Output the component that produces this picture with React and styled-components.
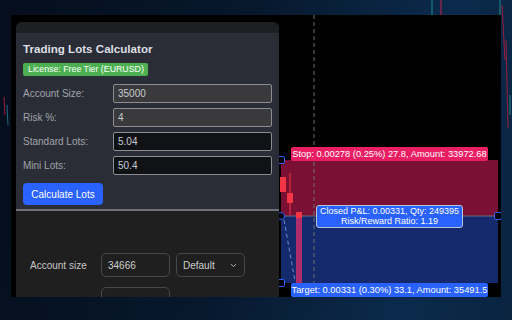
import styled, { createGlobalStyle } from "styled-components"

const Global = createGlobalStyle`
  html, body {
    margin: 0;
    padding: 0;
  }
  body {
    width: 512px;
    height: 320px;
    overflow: hidden;
    font-family: "Liberation Sans", Arial, sans-serif;
  }
`

const Desktop = styled.div`
  position: relative;
  width: 512px;
  height: 320px;
  overflow: hidden;
  background: linear-gradient(100deg, #050e1c 0%, #07182d 45%, #0b2a4c 80%, #0a2440 100%);
`

const Backdrop = styled.svg`
  position: absolute;
  inset: 0;
`

const Screen = styled.div`
  position: relative;
  display: flex;
  margin: 15px 0 0 11px;
  width: 490px;
  height: 282px;
  background: #000;
`

const Panel = styled.section`
  display: flex;
  flex-direction: column;
  margin: 7px 0 0 5px;
  width: 263px;
  border-radius: 6px 6px 0 0;
  overflow: hidden;
  background: #1f1f1f;
`

const PanelTop = styled.div`
  flex-shrink: 0;
  height: 11px;
  background: #1e1f23;
`

const Upper = styled.div`
  flex-shrink: 0;
  display: flex;
  flex-direction: column;
  align-items: flex-start;
  height: 178px;
  padding: 9px 7px 0;
  box-sizing: border-box;
  background: #2a2d35;
  border-bottom: 2px solid #6d7077;
`

const Title = styled.h1`
  margin: 0;
  font-size: 11.6px;
  line-height: 14px;
  font-weight: 700;
  color: #dcdfe4;
`

const Badge = styled.span`
  margin-top: 7px;
  height: 13px;
  padding: 0 4px 0 5px;
  border-radius: 2px;
  background: #4caf50;
  color: #fff;
  font-size: 8.8px;
  line-height: 13px;
`

const Fields = styled.div`
  display: flex;
  flex-direction: column;
  gap: 5px;
  margin-top: 8px;
  width: 100%;
`

const Row = styled.label`
  display: flex;
  align-items: center;
  height: 19px;
`

const Label = styled.span`
  width: 90px;
  font-size: 10px;
  color: #a0a4ac;
`

const Field = styled.div`
  flex: 1;
  height: 19px;
  box-sizing: border-box;
  padding: 0 4px;
  border: 1px solid #8c8e93;
  border-radius: 2px;
  background: ${p => (p.$dark ? "#111216" : "#3a3a3c")};
  color: #c9ccd1;
  font-size: 10px;
  line-height: 17px;
`

const Button = styled.button`
  margin-top: 8px;
  width: 80px;
  height: 22px;
  border: none;
  border-radius: 4px;
  background: #2962ff;
  color: #fff;
  font-family: inherit;
  font-size: 10px;
  padding: 0;
`

const Lower = styled.div`
  flex: 1;
  min-height: 0;
  display: flex;
  flex-direction: column;
  gap: 10px;
  padding: 42px 0 0 14px;
  background: #1f1f1f;
`

const LowerRow = styled.div`
  flex-shrink: 0;
  display: flex;
  align-items: center;
  gap: 6px;
`

const LowerLabel = styled.span`
  width: 65px;
  font-size: 10px;
  color: #c8c8c8;
`

const Box = styled.div`
  display: flex;
  align-items: center;
  justify-content: space-between;
  width: 69px;
  height: 24px;
  box-sizing: border-box;
  padding: 0 6px;
  border: 1px solid #474747;
  border-radius: 5px;
  color: #cfcfcf;
  font-size: 10px;
  margin-left: ${p => (p.$indent ? "71px" : "0")};
`

const Chart = styled.div`
  position: relative;
  flex: 1;
  overflow: hidden;
`

const Zone = styled.div`
  position: absolute;
  left: 2px;
  width: 217px;
  top: ${p => p.$top}px;
  height: ${p => p.$h}px;
  background: ${p => p.$color};
`

const Tag = styled.div`
  position: absolute;
  left: 12px;
  width: 197px;
  top: ${p => p.$top}px;
  height: 14px;
  border-radius: 2px;
  background: ${p => p.$color};
  color: #fff;
  font-size: 9.3px;
  line-height: 14px;
  text-align: center;
  white-space: nowrap;
`

const Result = styled.div`
  position: absolute;
  left: 37px;
  top: 190px;
  width: 147px;
  height: 23px;
  box-sizing: border-box;
  border: 1px solid #b9c3dd;
  border-radius: 3px;
  background: #2962ff;
  color: #fff;
  font-size: 9px;
  line-height: 9.5px;
  text-align: center;
  padding-top: 1px;
  white-space: nowrap;
`

const Handle = styled.div`
  position: absolute;
  left: ${p => p.$x - 4}px;
  top: ${p => p.$y - 4}px;
  width: 8px;
  height: 8px;
  box-sizing: border-box;
  border: 1.5px solid #2962ff;
  border-radius: ${p => (p.$round ? "50%" : "2px")};
  background: #000;
`

const Overlay = styled.svg`
  position: absolute;
  inset: 0;
`

const Chevron = () => (
  <svg width="9" height="9" viewBox="0 0 24 24" fill="none" stroke="#bbb" strokeWidth="2.5" strokeLinecap="round" strokeLinejoin="round">
    <path d="M6 9l6 6 6-6" />
  </svg>
)

export default function App() {
  return (
    <Desktop>
      <Global />
      <Backdrop width="512" height="320">
        <line x1="432" y1="0" x2="432" y2="15" stroke="#1f8a84" strokeWidth="1" />
        <line x1="441" y1="0" x2="441" y2="15" stroke="#c2234a" strokeWidth="1" />
        <line x1="500" y1="0" x2="500" y2="15" stroke="#1f8a84" strokeWidth="1" />
        <line x1="502" y1="5" x2="505" y2="60" stroke="#9a1d3e" strokeWidth="1" />
        <line x1="506" y1="40" x2="508" y2="128" stroke="#9a1d3e" strokeWidth="1" />
        <line x1="510" y1="95" x2="510" y2="115" stroke="#1f8a84" strokeWidth="1" />
        <line x1="4" y1="97" x2="5" y2="115" stroke="#9a1d3e" strokeWidth="1" />
        <line x1="7" y1="105" x2="8" y2="125" stroke="#1f6a84" strokeWidth="1" />
        <rect x="11" y="197" width="3" height="5" fill="#26a69a" />
      </Backdrop>
      <Screen>
        <Panel>
          <PanelTop />
          <Upper>
            <Title>Trading Lots Calculator</Title>
            <Badge>License: Free Tier (EURUSD)</Badge>
            <Fields>
              <Row><Label>Account Size:</Label><Field>35000</Field></Row>
              <Row><Label>Risk %:</Label><Field>4</Field></Row>
              <Row><Label>Standard Lots:</Label><Field $dark>5.04</Field></Row>
              <Row><Label>Mini Lots:</Label><Field $dark>50.4</Field></Row>
            </Fields>
            <Button>Calculate Lots</Button>
          </Upper>
          <Lower>
            <LowerRow>
              <LowerLabel>Account size</LowerLabel>
              <Box>34666</Box>
              <Box>Default <Chevron /></Box>
            </LowerRow>
            <LowerRow>
              <Box $indent />
            </LowerRow>
          </Lower>
        </Panel>
        <Chart>
          <Zone $top={145} $h={56} $color="#7a1034" />
          <Zone $top={201} $h={67} $color="#142a6c" />
          <Overlay width="222" height="282">
            <line x1="35" y1="0" x2="35" y2="282" stroke="#6f6f73" strokeWidth="1" strokeDasharray="4 3" />
            <line x1="2" y1="201" x2="219" y2="201" stroke="#6b6f80" strokeWidth="1" />
            <rect x="1" y="162" width="6" height="15" fill="#f23645" />
            <line x1="11" y1="158" x2="11" y2="200" stroke="#f23645" strokeWidth="1" />
            <rect x="8" y="178" width="6" height="10" fill="#f23645" />
            <rect x="17" y="198" width="6" height="70" fill="#e0306a" opacity="0.75" />
            <rect x="17" y="197" width="6" height="6" fill="#f23645" />
            <line x1="5" y1="205" x2="16" y2="266" stroke="#6b86d6" strokeWidth="1" strokeDasharray="4 3" />
          </Overlay>
          <Handle $x={2} $y={145} />
          <Handle $x={2} $y={201} $round />
          <Handle $x={219} $y={201} />
          <Handle $x={2} $y={268} />
          <Tag $top={132} $color="#e91e63">Stop: 0.00278 (0.25%) 27.8, Amount: 33972.68</Tag>
          <Result>
            Closed P&amp;L: 0.00331, Qty: 249395
            <br />
            Risk/Reward Ratio: 1.19
          </Result>
          <Tag $top={268} $color="#2962ff">Target: 0.00331 (0.30%) 33.1, Amount: 35491.5</Tag>
        </Chart>
      </Screen>
    </Desktop>
  )
}
